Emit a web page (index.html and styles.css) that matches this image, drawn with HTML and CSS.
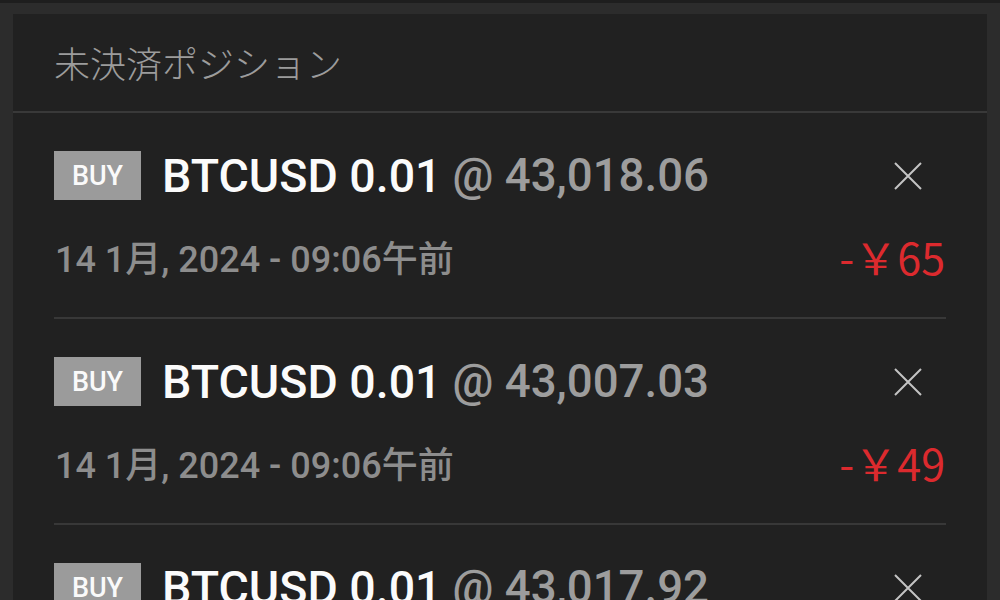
FILE: index.html
```html
<!DOCTYPE html>
<html lang="ja">
<head>
<meta charset="utf-8">
<link rel="stylesheet" href="styles.css">
</head>
<body>
<div class="card">
  <div class="card-header">未決済ポジション</div>
  <div class="row">
    <div class="line1">
      <span class="badge">BUY</span>
      <span class="title">BTCUSD 0.01</span>
      <span class="at">@ 43,018.06</span>
      <svg class="close" viewBox="0 0 28 28" width="28" height="28"><path d="M1 1 L27 27 M27 1 L1 27" stroke="#c4c4c4" stroke-width="2" fill="none"/></svg>
    </div>
    <div class="line2">
      <span class="date">14 1月, 2024 - 09:06午前</span>
      <span class="pl">-￥65</span>
    </div>
  </div>
  <div class="row">
    <div class="line1">
      <span class="badge">BUY</span>
      <span class="title">BTCUSD 0.01</span>
      <span class="at">@ 43,007.03</span>
      <svg class="close" viewBox="0 0 28 28" width="28" height="28"><path d="M1 1 L27 27 M27 1 L1 27" stroke="#c4c4c4" stroke-width="2" fill="none"/></svg>
    </div>
    <div class="line2">
      <span class="date">14 1月, 2024 - 09:06午前</span>
      <span class="pl">-￥49</span>
    </div>
  </div>
  <div class="row">
    <div class="line1">
      <span class="badge">BUY</span>
      <span class="title">BTCUSD 0.01</span>
      <span class="at">@ 43,017.92</span>
      <svg class="close" viewBox="0 0 28 28" width="28" height="28"><path d="M1 1 L27 27 M27 1 L1 27" stroke="#c4c4c4" stroke-width="2" fill="none"/></svg>
    </div>
    <div class="line2">
      <span class="date">14 1月, 2024 - 09:06午前</span>
      <span class="pl">-￥52</span>
    </div>
  </div>
</div>
</body>
</html>
```
FILE: styles.css
```css
html, body {
  margin: 0;
  height: 100%;
  overflow: hidden;
}
body {
  background: #2c2c2c;
  border-top: 3px solid #1e1e1e;
  box-sizing: border-box;
  padding: 11px 13px 0 13px;
  font-family: Roboto, "Noto Sans CJK JP", sans-serif;
}
.card {
  background: #212121;
  min-height: 700px;
}
.card-header {
  height: 99px;
  box-sizing: border-box;
  padding-left: 41px;
  padding-bottom: 2px;
  display: flex;
  align-items: center;
  font-family: "Noto Sans CJK JP", sans-serif;
  font-weight: 300;
  font-size: 36px;
  color: #9c9c9c;
  border-bottom: 2px solid #393939;
}
.row {
  margin: 0 41px;
  padding: 38px 0 37px 0;
  border-bottom: 2px solid #383838;
}
.line1 {
  display: flex;
  align-items: center;
  height: 49px;
}
.badge {
  width: 87px;
  height: 49px;
  background: #9b9b9b;
  color: #fafafa;
  font-size: 27px;
  font-weight: 500;
  display: flex;
  align-items: center;
  justify-content: center;
}
.title {
  margin-left: 21px;
  font-size: 46.5px;
  font-weight: 500;
  color: #fbfbfb;
}
.at {
  margin-left: 11px;
  font-size: 45.6px;
  font-weight: 500;
  color: #9d9d9d;
}
.close {
  margin-left: auto;
  margin-right: 24px;
}
.line2 {
  margin-top: 32px;
  height: 48px;
  display: flex;
  align-items: center;
  justify-content: space-between;
}
.date {
  margin-left: 1px;
  font-size: 36px;
  font-weight: 500;
  color: #8d8d8d;
}
.pl {
  font-family: "Noto Sans CJK JP", sans-serif;
  font-weight: 400;
  font-size: 43px;
  color: #dc2a2e;
  margin-right: 1px;
}
```
